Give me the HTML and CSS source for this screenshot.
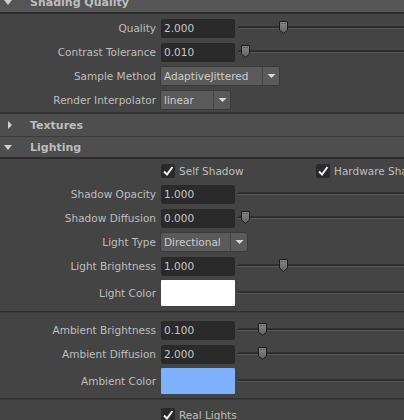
FILE: index.html
```html
<!DOCTYPE html>
<html>
<head>
<meta charset="utf-8">
<link rel="stylesheet" href="styles.css">
</head>
<body>
<div class="panel">
  <div class="hdr hdr-top">
    <svg class="arr" width="12" height="12" viewBox="0 0 12 12"><path d="M2 4 L10 4 L6 9 Z" fill="#cfcfcf"/></svg>
    <span>Shading Quality</span>
  </div>
  <div class="sect sect-first">
    <div class="row">
      <div class="lbl">Quality</div>
      <div class="field">2.000</div>
      <div class="slider"><div class="track"></div>
        <svg class="thumb" style="left:40px" width="11" height="15" viewBox="0 0 11 15"><defs><linearGradient id="g1" x1="0" y1="0" x2="0" y2="1"><stop offset="0" stop-color="#8a8a8a"/><stop offset="1" stop-color="#5e5e5e"/></linearGradient></defs><path d="M1.5 1.5 H9.5 V10 L5.5 13.5 L1.5 10 Z" fill="url(#g1)" stroke="#1c1c1c"/><rect x="3.5" y="3" width="1" height="1" fill="#2a2a2a"/><rect x="6.5" y="3" width="1" height="1" fill="#2a2a2a"/></svg>
      </div>
    </div>
    <div class="row">
      <div class="lbl">Contrast Tolerance</div>
      <div class="field">0.010</div>
      <div class="slider"><div class="track"></div>
        <svg class="thumb" style="left:2px" width="11" height="15" viewBox="0 0 11 15"><path d="M1.5 1.5 H9.5 V10 L5.5 13.5 L1.5 10 Z" fill="url(#g1)" stroke="#1c1c1c"/><rect x="3.5" y="3" width="1" height="1" fill="#2a2a2a"/><rect x="6.5" y="3" width="1" height="1" fill="#2a2a2a"/></svg>
      </div>
    </div>
    <div class="row">
      <div class="lbl">Sample Method</div>
      <div class="drop" style="width:118px"><span class="dtext">AdaptiveJittered</span><span class="darr"><svg width="9" height="6" viewBox="0 0 9 6"><path d="M0.5 1 H8.5 L4.5 5 Z" fill="#d8d8d8"/></svg></span></div>
    </div>
    <div class="row">
      <div class="lbl">Render Interpolator</div>
      <div class="drop" style="width:69px"><span class="dtext">linear</span><span class="darr"><svg width="9" height="6" viewBox="0 0 9 6"><path d="M0.5 1 H8.5 L4.5 5 Z" fill="#d8d8d8"/></svg></span></div>
    </div>
  </div>
  <div class="hdr hdr-closed">
    <svg class="arr" width="12" height="12" viewBox="0 0 12 12"><path d="M6 2 L10 6 L6 10 Z" fill="#cfcfcf"/></svg>
    <span>Textures</span>
  </div>
  <div class="hdr hdr-open">
    <svg class="arr" width="12" height="12" viewBox="0 0 12 12"><path d="M2 4 L10 4 L6 9 Z" fill="#cfcfcf"/></svg>
    <span>Lighting</span>
  </div>
  <div class="sect">
    <div class="row row-check">
      <div class="lbl"></div>
      <div class="check-group first">
        <span class="cb"><svg width="14" height="14" viewBox="0 0 14 14"><path d="M3 7.5 L6 10.5 L11.5 3" fill="none" stroke="#f0f0f0" stroke-width="2"/></svg></span>
        <span class="ctext">Self Shadow</span>
      </div>
      <div class="check-group">
        <span class="cb"><svg width="14" height="14" viewBox="0 0 14 14"><path d="M3 7.5 L6 10.5 L11.5 3" fill="none" stroke="#f0f0f0" stroke-width="2"/></svg></span>
        <span class="ctext">Hardware Shadow</span>
      </div>
    </div>
    <div class="row">
      <div class="lbl">Shadow Opacity</div>
      <div class="field">1.000</div>
      <div class="slider"><div class="track"></div></div>
    </div>
    <div class="row">
      <div class="lbl">Shadow Diffusion</div>
      <div class="field">0.000</div>
      <div class="slider"><div class="track"></div>
        <svg class="thumb" style="left:2px" width="11" height="15" viewBox="0 0 11 15"><path d="M1.5 1.5 H9.5 V10 L5.5 13.5 L1.5 10 Z" fill="url(#g1)" stroke="#1c1c1c"/><rect x="3.5" y="3" width="1" height="1" fill="#2a2a2a"/><rect x="6.5" y="3" width="1" height="1" fill="#2a2a2a"/></svg>
      </div>
    </div>
    <div class="row">
      <div class="lbl">Light Type</div>
      <div class="drop" style="width:86px"><span class="dtext">Directional</span><span class="darr"><svg width="9" height="6" viewBox="0 0 9 6"><path d="M0.5 1 H8.5 L4.5 5 Z" fill="#d8d8d8"/></svg></span></div>
    </div>
    <div class="row">
      <div class="lbl">Light Brightness</div>
      <div class="field">1.000</div>
      <div class="slider"><div class="track"></div>
        <svg class="thumb" style="left:40px" width="11" height="15" viewBox="0 0 11 15"><path d="M1.5 1.5 H9.5 V10 L5.5 13.5 L1.5 10 Z" fill="url(#g1)" stroke="#1c1c1c"/><rect x="3.5" y="3" width="1" height="1" fill="#2a2a2a"/><rect x="6.5" y="3" width="1" height="1" fill="#2a2a2a"/></svg>
      </div>
    </div>
    <div class="row row-color">
      <div class="lbl">Light Color</div>
      <div class="swatch swatch-white"></div>
      <div class="slider"><div class="track"></div></div>
    </div>
    <div class="sep"></div>
    <div class="row">
      <div class="lbl">Ambient Brightness</div>
      <div class="field">0.100</div>
      <div class="slider"><div class="track"></div>
        <svg class="thumb" style="left:19px" width="11" height="15" viewBox="0 0 11 15"><path d="M1.5 1.5 H9.5 V10 L5.5 13.5 L1.5 10 Z" fill="url(#g1)" stroke="#1c1c1c"/><rect x="3.5" y="3" width="1" height="1" fill="#2a2a2a"/><rect x="6.5" y="3" width="1" height="1" fill="#2a2a2a"/></svg>
      </div>
    </div>
    <div class="row">
      <div class="lbl">Ambient Diffusion</div>
      <div class="field">2.000</div>
      <div class="slider"><div class="track"></div>
        <svg class="thumb" style="left:19px" width="11" height="15" viewBox="0 0 11 15"><path d="M1.5 1.5 H9.5 V10 L5.5 13.5 L1.5 10 Z" fill="url(#g1)" stroke="#1c1c1c"/><rect x="3.5" y="3" width="1" height="1" fill="#2a2a2a"/><rect x="6.5" y="3" width="1" height="1" fill="#2a2a2a"/></svg>
      </div>
    </div>
    <div class="row row-color">
      <div class="lbl">Ambient Color</div>
      <div class="swatch swatch-blue"></div>
      <div class="slider"><div class="track"></div></div>
    </div>
    <div class="sep sep-last"></div>
    <div class="row row-check">
      <div class="lbl"></div>
      <div class="check-group first">
        <span class="cb"><svg width="14" height="14" viewBox="0 0 14 14"><path d="M3 7.5 L6 10.5 L11.5 3" fill="none" stroke="#f0f0f0" stroke-width="2"/></svg></span>
        <span class="ctext">Real Lights</span>
      </div>
    </div>
  </div>
</div>
</body>
</html>
```
FILE: styles.css
```css
html, body {
  margin: 0;
  padding: 0;
  background: #444444;
  overflow: hidden;
  width: 404px;
  height: 420px;
}
body {
  font-family: "DejaVu Sans", Verdana, sans-serif;
  font-size: 10.5px;
  color: #c0c0c0;
}
.panel {
  width: 404px;
  overflow: hidden;
}
.hdr {
  display: flex;
  align-items: center;
  font-weight: bold;
  font-size: 11px;
  color: #bdbdbd;
  background: #4e4e4e;
  white-space: nowrap;
}
.hdr .arr {
  margin-left: 2px;
  width: 12px;
  flex: none;
}
.hdr span {
  margin-left: 16px;
}
.hdr-top {
  margin-top: -8px;
  height: 20px;
  background: #555555;
  border-bottom: 2px solid #2b2b2b;
}
.hdr-closed {
  height: 22px;
  border-top: 2px solid #333333;
  border-bottom: 1px solid #3a3a3a;
}
.hdr-open {
  height: 20px;
  border-bottom: 2px solid #2e2e2e;
}
.sect-first {
  padding-top: 2px;
}
.row {
  display: flex;
  align-items: center;
  height: 24px;
  white-space: nowrap;
}
.lbl {
  width: 156px;
  flex: none;
  text-align: right;
  color: #bebebe;
}
.field {
  margin-left: 5px;
  width: 71px;
  height: 19px;
  line-height: 19px;
  padding-left: 3px;
  background: #2a2a2a;
  border-radius: 2px;
  color: #c8c8c8;
  flex: none;
}
.slider {
  position: relative;
  flex: 1;
  height: 19px;
  margin-left: 3px;
}
.track {
  margin-top: 7px;
  height: 1px;
  background: #2a2a2a;
  border-bottom: 1px solid #575757;
  border-top: 1px solid #333333;
}
.thumb {
  position: absolute;
  top: 1px;
}
.drop {
  margin-left: 4px;
  height: 18px;
  display: flex;
  align-items: stretch;
  background: #5a5a5a;
  border: 1px solid #3b3b3b;
  border-radius: 3px;
  box-sizing: content-box;
  flex: none;
}
.dtext {
  flex: 1;
  padding-left: 3px;
  line-height: 18px;
  color: #cdcdcd;
  overflow: hidden;
}
.darr {
  width: 16px;
  border-left: 1px solid #444444;
  display: flex;
  align-items: center;
  justify-content: center;
}
.row-check {
  height: 23px;
}
.check-group {
  display: flex;
  align-items: center;
  flex: none;
}
.check-group.first {
  margin-left: 5px;
  width: 155px;
}
.cb {
  width: 14px;
  height: 14px;
  background: #2a2a2a;
  border-radius: 2px;
  display: flex;
}
.ctext {
  margin-left: 4px;
  color: #bebebe;
}
.row-color {
  height: 29px;
}
.swatch {
  margin-left: 5px;
  width: 74px;
  height: 26px;
  flex: none;
  border-radius: 1px;
}
.swatch-white {
  background: #ffffff;
}
.swatch-blue {
  background: #7eb2ff;
}
.row-color .slider {
  height: 26px;
}
.row-color .track {
  margin-top: 11px;
}
.sep {
  margin: 4px 0 5px 0;
  height: 1px;
  background: #2e2e2e;
  border-bottom: 1px solid #3a3a3a;
}
.sep-last {
  margin: 3px 0 3px 0;
}
```
